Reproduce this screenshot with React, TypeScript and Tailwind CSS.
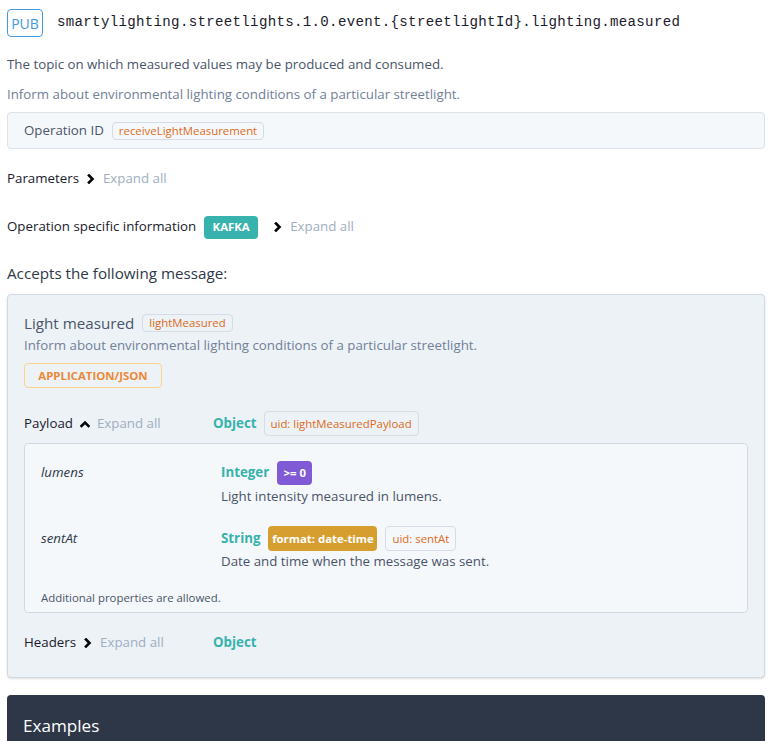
import React from 'react';

const Chevron = ({ up = false }: { up?: boolean }) => (
  <svg className="w-[10px] h-[10px] text-black" viewBox="0 0 10 10" fill="none" stroke="currentColor" strokeWidth={2.6} strokeLinecap="square" strokeLinejoin="miter">
    {up ? <path d="M1.5 7l3.5-3.5L8.5 7" /> : <path d="M3 1.5l3.5 3.5L3 8.5" />}
  </svg>
);

const Tag = ({ children }: { children: React.ReactNode }) => (
  <span className="inline-flex items-center border border-[#d5dce6] rounded px-[6px] text-[11.4px] text-[#dd6b20] bg-transparent">
    {children}
  </span>
);

const ExpandRow = ({ label, up = false }: { label: string; up?: boolean }) => (
  <div className="flex items-center">
    <span className="text-[13.3px] text-[#1a202c]">{label}</span>
    <span className="ml-[7px] mr-[7px] flex items-center"><Chevron up={up} /></span>
    <span className="text-[13.3px] text-[#a0aec0]">Expand all</span>
  </div>
);

export default function App() {
  return (
    <div className="bg-white min-h-[741px] pl-[7px] pr-[8px] font-['Open_Sans',sans-serif]">
      <div className="pt-[9px] flex items-center">
        <span className="h-[28px] w-[36px] flex items-center justify-center border border-[#4299e1] rounded text-[14px] text-[#4299e1]">PUB</span>
        <span className="ml-[14px] font-['Liberation_Mono',monospace] text-[14.1px] tracking-[0.32px] text-[#1a202c]">smartylighting.streetlights.1.0.event.{'{'}streetlightId{'}'}.lighting.measured</span>
      </div>

      <p className="mt-[17px] text-[13.3px] leading-5 text-[#4a5568]">The topic on which measured values may be produced and consumed.</p>
      <p className="mt-[10px] text-[13.3px] leading-5 text-[#718096]">Inform about environmental lighting conditions of a particular streetlight.</p>

      <div className="mt-[8px] h-[37px] flex items-center pl-[16px] border border-[#dbe2ea] rounded bg-[#f5f8fb]">
        <span className="text-[13.3px] text-[#4a5568]">Operation ID</span>
        <span className="ml-[8px] h-[18px] flex"><Tag>receiveLightMeasurement</Tag></span>
      </div>

      <div className="mt-[20px] h-5 flex items-center">
        <ExpandRow label="Parameters" />
      </div>

      <div className="mt-[26px] h-[24px] flex items-center">
        <span className="text-[13.3px] text-[#1a202c]">Operation specific information</span>
        <span className="ml-[8px] h-[23px] w-[54px] flex items-center justify-center rounded bg-[#38b2ac] text-white text-[11.4px] font-bold">KAFKA</span>
        <span className="ml-[15px] mr-[7px] flex items-center"><Chevron /></span>
        <span className="text-[13.3px] text-[#a0aec0]">Expand all</span>
      </div>

      <h3 className="mt-[22px] text-[15.2px] leading-6 text-[#2d3748]">Accepts the following message:</h3>

      <div className="mt-[9px] border border-[#d1d9e3] rounded bg-[#edf2f7] shadow-sm px-[16px] pt-[16px] pb-[24px]">
        <div className="h-6 flex items-center">
          <span className="text-[15.2px] text-[#4a5568]">Light measured</span>
          <span className="ml-[8px] h-[18px] flex"><Tag>lightMeasured</Tag></span>
        </div>
        <p className="text-[13.3px] leading-5 text-[#718096]">Inform about environmental lighting conditions of a particular streetlight.</p>
        <div className="mt-[8px] flex">
          <span className="h-[25px] w-[138px] flex items-center justify-center border border-[#fbd38d] rounded text-[11.4px] font-bold text-[#ed8936]">APPLICATION/JSON</span>
        </div>

        <div className="mt-[23px] h-[25px] flex items-center">
          <div className="w-[189px] flex items-center">
            <ExpandRow label="Payload" up />
          </div>
          <span className="text-[13.3px] font-bold text-[#38b2ac]">Object</span>
          <span className="ml-[7px] h-[25px] flex"><Tag>uid: lightMeasuredPayload</Tag></span>
        </div>

        <div className="mt-[7px] border border-[#d1d9e3] rounded bg-[#f5f8fb] pl-[16px] pt-[17px] pb-[6px]">
          <div className="flex">
            <div className="w-[180px] h-[24px] flex items-center text-[13.3px] italic text-[#2d3748]">lumens</div>
            <div>
              <div className="h-[24px] flex items-center">
                <span className="text-[13.3px] font-bold text-[#38b2ac]">Integer</span>
                <span className="ml-[8px] h-[24px] w-[35px] flex items-center justify-center rounded bg-[#805ad5] text-white text-[11.4px] font-bold">&gt;= 0</span>
              </div>
              <p className="mt-[1px] text-[13.3px] leading-5 text-[#4a5568]">Light intensity measured in lumens.</p>
            </div>
          </div>

          <div className="mt-[20px] flex">
            <div className="w-[180px] h-[25px] flex items-center text-[13.3px] italic text-[#2d3748]">sentAt</div>
            <div>
              <div className="h-[25px] flex items-center">
                <span className="text-[13.3px] font-bold text-[#38b2ac]">String</span>
                <span className="ml-[8px] h-[25px] w-[109px] flex items-center justify-center rounded bg-[#d69e2e] text-white text-[11.4px] font-bold">format: date-time</span>
                <span className="ml-[8px] h-[25px] flex"><Tag>uid: sentAt</Tag></span>
              </div>
              <p className="text-[13.3px] leading-5 text-[#4a5568]">Date and time when the message was sent.</p>
            </div>
          </div>

          <p className="mt-[19px] text-[11.4px] leading-4 text-[#4a5568]">Additional properties are allowed.</p>
        </div>

        <div className="mt-[20px] h-5 flex items-center">
          <div className="w-[189px] flex items-center">
            <ExpandRow label="Headers" />
          </div>
          <span className="text-[13.3px] font-bold text-[#38b2ac]">Object</span>
        </div>
      </div>

      <div className="mt-[17px] rounded-t bg-[#2d3748] px-[16px] pt-[17px] h-[60px]">
        <h4 className="text-[17.1px] leading-7 text-white">Examples</h4>
      </div>
    </div>
  );
}
